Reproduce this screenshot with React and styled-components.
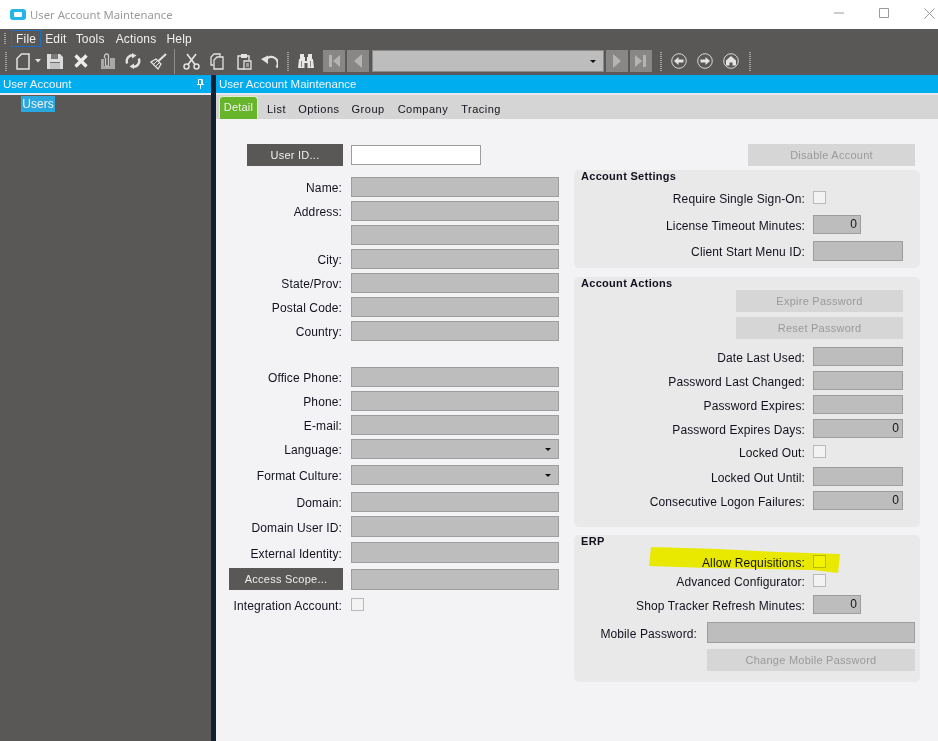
import React from "react";
import styled, { createGlobalStyle } from "styled-components";

const Global = createGlobalStyle`
  html, body { margin: 0; padding: 0; height: 100%; overflow: hidden; background: #f3f3f5; }
  * { box-sizing: border-box; }
  #root { height: 100%; }
`;

const FONT = `"Liberation Sans", Arial, sans-serif`;

const Page = styled.div`
  height: 741px; width: 938px; display: flex; flex-direction: column; font-family: ${FONT}; font-size: 12px; color: #12121e; overflow: hidden;
`;
const TitleBar = styled.div`
  height: 29px; background: #fff; display: flex; align-items: center; flex: none;
`;
const AppIcon = styled.div`
  width: 16px; height: 11px; margin: 0 4px 1px 10px; border-radius: 3px; background: #22b5e8; display: flex; align-items: center; justify-content: center;
  &::after { content: ""; width: 8px; height: 5px; background: #fff; border-radius: 1px; }
`;
const TitleText = styled.div`
  font-family: "Noto Sans", sans-serif; font-size: 11.3px; color: #9b9b9b; flex: 1;
`;
const WinBtn = styled.svg`
  margin-right: ${p => p.$mr}px; flex: none; margin-bottom: 3px;
`;
const Chrome = styled.div`
  background: #595856; height: 46px; flex: none; display: flex; flex-direction: column;
`;
const MenuBar = styled.div`
  height: 18px; display: flex; align-items: flex-end; color: #f0f0f0; padding-left: 4px; letter-spacing: 0.2px;
`;
const Grip = styled.div`
  width: 2px; height: ${p => p.$h}px; margin-left: ${p => p.$ml}px; flex: none; align-self: center;
  background: repeating-linear-gradient(to bottom, #a5a5a5 0 1px, transparent 1px 2px);
`;
const MenuItem = styled.div`
  margin-left: ${p => p.$ml}px; height: 17px; padding: 0 ${p => p.$active ? 4 : 0}px;
  border: ${p => p.$active ? "1px solid #1f6fc0" : "none"};
  line-height: ${p => p.$active ? 16 : 18}px;
`;
const Toolbar = styled.div`
  height: 28px; display: flex; align-items: center;
`;
const Tool = styled.svg`
  margin-left: ${p => p.$ml}px; flex: none; display: block;
`;
const ToolSep = styled.div`
  width: 1px; height: 25px; background: #8f8e8c; margin-left: ${p => p.$ml}px; flex: none;
`;
const NavButton = styled.div`
  width: 22px; height: 22px; margin-left: ${p => p.$ml}px; background: #888786; display: flex; align-items: center; justify-content: center; flex: none;
`;
const NavCombo = styled.div`
  width: 232px; height: 22px; margin-left: 3px; background: #bdbdbd; border: 1px solid #8a8a8a; position: relative; flex: none;
`;
const Caret = styled.div`
  position: absolute; right: ${p => p.$r}px; top: 50%; margin-top: -1px; width: 0; height: 0;
  border-left: 3px solid transparent; border-right: 3px solid transparent; border-top: 3px solid #111;
`;
const Main = styled.div`
  flex: 1; display: flex; min-height: 0;
`;
const LeftPane = styled.div`
  width: 211px; background: #595856; flex: none; display: flex; flex-direction: column;
`;
const Splitter = styled.div`
  width: 5px; background: #10202f; flex: none;
`;
const RightPane = styled.div`
  flex: 1; display: flex; flex-direction: column; background: #f3f3f5; min-width: 0;
`;
const PaneHeader = styled.div`
  height: 18px; background: #00adef; color: #f4f4f4; display: flex; align-items: center; justify-content: space-between; padding: 0 7px 0 3px; flex: none; font-size: 11.5px;
`;
const HeaderRule = styled.div`
  height: 2px; background: #e8e8e8; flex: none;
`;
const TreeItem = styled.div`
  margin: 1px 0 0 21px; width: 34px; height: 16px; background: #29a8e0; color: #f2f2f2; line-height: 16px; text-align: center;
`;
const TabBar = styled.div`
  height: 24px; background: #d5d5d5; display: flex; flex: none; align-items: flex-end; padding-left: 3px;
`;
const ActiveTab = styled.div`
  width: 39px; height: 23px; background: #67b52a; color: #f0f0f0; border: 1px solid #dff0d0; border-bottom: none; border-radius: 4px 4px 0 0; text-align: center; line-height: 20px; font-size: 11px; letter-spacing: 0.2px;
`;
const Tab = styled.div`
  margin-left: ${p => p.$ml}px; height: 24px; line-height: 28px; font-size: 11px; letter-spacing: 0.5px;
`;
const FormArea = styled.div`
  flex: 1; display: flex; align-items: flex-start; padding: 25px 0 0 13px;
`;
const LeftCol = styled.div`
  width: 330px; flex: none; display: flex; flex-direction: column;
`;
const RightCol = styled.div`
  width: 346px; flex: none; margin-left: 15px; display: flex; flex-direction: column;
`;
const Row = styled.div`
  display: flex; align-items: center; height: ${p => p.$h}px; margin-top: ${p => p.$mt || 0}px; flex: none;
`;
const Label = styled.div`
  width: ${p => p.$w}px; margin-right: ${p => p.$gap}px; padding-top: 2px; text-align: right; flex: none; white-space: nowrap; letter-spacing: 0.12px;
`;
const Field = styled.div`
  width: ${p => p.$w}px; height: ${p => p.$h}px; flex: none; background: ${p => p.$white ? "#fff" : "#bdbdbd"}; border: 1px solid #9d9d9d;
  position: relative; display: flex; align-items: center; justify-content: flex-end; padding: 0 3px 2px 0;
`;
const Check = styled.div`
  width: 13px; height: 13px; flex: none; background: #f3f3f3; border: 1px solid #b9b9b9; margin-bottom: 1px;
`;
const DarkButton = styled.div`
  width: ${p => p.$w}px; height: 22px; flex: none; margin: 0 8px 0 ${p => p.$ml}px; background: #595856; color: #eee; display: flex; align-items: center; justify-content: center; font-size: 11px; letter-spacing: 0.25px;
`;
const DisabledButton = styled.div`
  width: ${p => p.$w}px; height: 22px; flex: none; margin-left: ${p => p.$ml}px; margin-top: ${p => p.$mt || 0}px; background: #d6d6d6; color: #9a9a9a; display: flex; align-items: center; justify-content: center; font-size: 11px; letter-spacing: 0.25px;
`;
const Panel = styled.div`
  height: ${p => p.$h}px; margin-top: ${p => p.$mt}px; background: #e9e9e9; border-radius: 5px; display: flex; flex-direction: column; position: relative; flex: none;
`;
const PanelTitle = styled.div`
  height: 13px; line-height: 13px; padding-left: 7px; font-weight: bold; font-size: 11px; letter-spacing: 0.3px;
`;
const Highlight = styled.svg`
  position: absolute; left: 74px; top: 10px; mix-blend-mode: multiply; pointer-events: none;
`;

const C = "#e2e2e2";

const Icons = {
  New: () => (
    <Tool $ml={9} width="14" height="17" viewBox="0 0 14 17"><path d="M5.5 1H13V16H1V5.5Z" fill="none" stroke={C} strokeWidth="1.5" /></Tool>
  ),
  Drop: () => (
    <Tool $ml={5} width="6" height="4" viewBox="0 0 6 4"><path d="M0 0H6L3 3.5Z" fill={C} /></Tool>
  ),
  Save: () => (
    <Tool $ml={6} width="16" height="15" viewBox="0 0 16 15"><path d="M0 0H13L16 3V15H0Z" fill="#dcdcdc" /><path d="M4 0h7v5H4z" fill="#7a7977" /><path d="M3 8.5h10V15H3z" fill="#c4c4c4" /><path d="M3 8h10v1H3z" fill="#6f6e6c" /></Tool>
  ),
  Close: () => (
    <Tool $ml={11} width="14" height="14" viewBox="0 0 14 14"><path d="M1.5 1.5L12.5 12.5M12.5 1.5L1.5 12.5" stroke="#ececec" strokeWidth="3.4" /></Tool>
  ),
  Clip: () => (
    <Tool $ml={12} width="15" height="17" viewBox="0 0 15 17"><path d="M1 6H4V16H1ZM10 5H15V16H4V13H10Z" fill="#a9a8a6" /><path d="M4.5 5V3a2 2 0 0 1 4 0V12a1.6 1.6 0 0 1-3 0V5" fill="none" stroke="#c9c9c9" strokeWidth="1.3" /></Tool>
  ),
  Refresh: () => (
    <Tool $ml={10} width="16" height="16" viewBox="0 0 16 16"><path d="M2.2 10.5A6 6 0 0 1 7.5 2.2" fill="none" stroke={C} strokeWidth="2.4" /><path d="M13.8 5.5A6 6 0 0 1 8.5 13.8" fill="none" stroke={C} strokeWidth="2.4" /><path d="M7 0L11.5 2.5L7 5.5Z M9 10.5L4.5 13.5L9 16Z" fill={C} /></Tool>
  ),
  Broom: () => (
    <Tool $ml={9} width="17" height="17" viewBox="0 0 17 17"><path d="M6 6L11 11L8 16L1 9Z" fill="none" stroke={C} strokeWidth="1.3" /><path d="M8.5 8L16 1" stroke={C} strokeWidth="2" /><path d="M4 11L7 8M6 13L9 10" stroke={C} strokeWidth="1" /></Tool>
  ),
  Scissors: () => (
    <Tool $ml={8} width="17" height="17" viewBox="0 0 17 17"><circle cx="3.5" cy="13.5" r="2.5" fill="none" stroke={C} strokeWidth="1.5" /><circle cx="13.5" cy="13.5" r="2.5" fill="none" stroke={C} strokeWidth="1.5" /><path d="M5 11.5L13 1M12 11.5L4 1" stroke={C} strokeWidth="1.7" /></Tool>
  ),
  Copy: () => (
    <Tool $ml={10} width="14" height="17" viewBox="0 0 14 17"><path d="M3.5 12H1V4L4 1H10V4" fill="none" stroke={C} strokeWidth="1.3" /><path d="M7 4H13V16H4V7Z" fill="#595856" stroke={C} strokeWidth="1.3" /></Tool>
  ),
  Paste: () => (
    <Tool $ml={13} width="15" height="17" viewBox="0 0 15 17"><path d="M4 3H1V16H7M10 3H12V7" fill="none" stroke={C} strokeWidth="1.4" /><path d="M4 1H10V5H4Z" fill={C} /><path d="M7 8H14V16H7Z" fill="#595856" stroke={C} strokeWidth="1.3" /><path d="M9 11H12M9 13H12" stroke={C} /></Tool>
  ),
  Undo: () => (
    <Tool $ml={9} width="17" height="13" viewBox="0 0 17 13"><path d="M15.5 12.5A6.5 6.5 0 0 0 5 4.5" fill="none" stroke={C} strokeWidth="2.2" /><path d="M0 4L7 0.5V9Z" fill={C} /></Tool>
  ),
  Binoculars: () => (
    <Tool $ml={9} width="16" height="15" viewBox="0 0 16 15"><path d="M2 0H6V3H7V7H9V3H10V0H14V5H15L16 14H9.5V9H6.5V14H0L1 5H2Z" fill="#e6e6e6" /><path d="M3.5 7V13M12.5 7V13" stroke="#8a8a88" /></Tool>
  ),
};

const Nav = {
  First: () => <svg width="14" height="14" viewBox="0 0 14 14"><path d="M2 1H5V13H2ZM13 1V13L6 7Z" fill="#b4b4b4" /></svg>,
  Prev: () => <svg width="10" height="14" viewBox="0 0 10 14"><path d="M9 0V14L1 7Z" fill="#b4b4b4" /></svg>,
  Next: () => <svg width="10" height="14" viewBox="0 0 10 14"><path d="M1 0V14L9 7Z" fill="#b4b4b4" /></svg>,
  Last: () => <svg width="14" height="14" viewBox="0 0 14 14"><path d="M1 1L8 7L1 13ZM9 1H12V13H9Z" fill="#b4b4b4" /></svg>,
};

const RoundTool = ({ ml, children }) => (
  <Tool $ml={ml} width="16" height="16" viewBox="0 0 16 16">
    <circle cx="8" cy="8" r="7.3" fill="none" stroke="#d6d6d6" strokeWidth="1" />
    {children}
  </Tool>
);

const LeftField = ({ label, mt = 4, h = 20, select }) => (
  <Row $h={h} $mt={mt}>
    <Label $w={113} $gap={9}>{label}</Label>
    <Field $w={208} $h={h}>{select && <Caret $r={7} />}</Field>
  </Row>
);

const SideRow = ({ label, mt, h = 19, w = 90, value, check }) => (
  <Row $h={h} $mt={mt}>
    <Label $w={231} $gap={8}>{label}</Label>
    {check ? <Check /> : <Field $w={w} $h={h}>{value}</Field>}
  </Row>
);

export default function App() {
  return (
    <Page>
      <Global />
      <TitleBar>
        <AppIcon />
        <TitleText>User Account Maintenance</TitleText>
        <WinBtn $mr={35} width="10" height="2" viewBox="0 0 10 2"><path d="M0 1H10" stroke="#9a9a9a" /></WinBtn>
        <WinBtn $mr={35} width="10" height="10" viewBox="0 0 10 10"><path d="M.5.5H9.5V9.5H.5Z" fill="none" stroke="#9a9a9a" /></WinBtn>
        <WinBtn $mr={3} width="11" height="11" viewBox="0 0 11 11"><path d="M.5.5L10.5 10.5M10.5.5L.5 10.5" stroke="#9a9a9a" /></WinBtn>
      </TitleBar>
      <Chrome>
        <MenuBar>
          <Grip $h={11} $ml={0} />
          <MenuItem $active $ml={5}>File</MenuItem>
          <MenuItem $ml={4}>Edit</MenuItem>
          <MenuItem $ml={9}>Tools</MenuItem>
          <MenuItem $ml={11}>Actions</MenuItem>
          <MenuItem $ml={10}>Help</MenuItem>
        </MenuBar>
        <Toolbar>
          <Grip $h={19} $ml={5} />
          <Icons.New />
          <Icons.Drop />
          <Icons.Save />
          <Icons.Close />
          <Icons.Clip />
          <Icons.Refresh />
          <Icons.Broom />
          <ToolSep $ml={7} />
          <Icons.Scissors />
          <Icons.Copy />
          <Icons.Paste />
          <Icons.Undo />
          <Grip $h={19} $ml={9} />
          <Icons.Binoculars />
          <NavButton $ml={9}><Nav.First /></NavButton>
          <NavButton $ml={2}><Nav.Prev /></NavButton>
          <NavCombo><Caret $r={7} /></NavCombo>
          <NavButton $ml={2}><Nav.Next /></NavButton>
          <NavButton $ml={2}><Nav.Last /></NavButton>
          <Grip $h={19} $ml={8} />
          <RoundTool ml={9}><path d="M3 8L7.5 4V6.5H12.5V9.5H7.5V12Z" fill="#e4e4e4" /></RoundTool>
          <RoundTool ml={10}><path d="M13 8L8.5 4V6.5H3.5V9.5H8.5V12Z" fill="#e4e4e4" /></RoundTool>
          <RoundTool ml={10}><path d="M8 3L13 7.5V12.5H9.5V9.5H6.5V12.5H3V7.5Z" fill="#e4e4e4" /></RoundTool>
          <Grip $h={19} $ml={10} />
        </Toolbar>
      </Chrome>
      <Main>
        <LeftPane>
          <PaneHeader>
            <span>User Account</span>
            <svg width="7" height="10" viewBox="0 0 7 10"><path d="M1.5.5H5.5V5.5H1.5ZM0 5.5H7M3.5 5.5V10" fill="none" stroke="#f4f4f4" /><path d="M4 1H5.5V5H4Z" fill="#f4f4f4" /></svg>
          </PaneHeader>
          <HeaderRule />
          <TreeItem>Users</TreeItem>
        </LeftPane>
        <Splitter />
        <RightPane>
          <PaneHeader>
            <span>User Account Maintenance</span>
          </PaneHeader>
          <HeaderRule />
          <TabBar>
            <ActiveTab>Detail</ActiveTab>
            <Tab $ml={9}>List</Tab>
            <Tab $ml={12}>Options</Tab>
            <Tab $ml={12}>Group</Tab>
            <Tab $ml={13}>Company</Tab>
            <Tab $ml={13}>Tracing</Tab>
          </TabBar>
          <FormArea>
            <LeftCol>
              <Row $h={22}>
                <DarkButton $w={96} $ml={18}>User ID...</DarkButton>
                <Field $w={130} $h={20} $white />
              </Row>
              <LeftField label="Name:" mt={11} />
              <LeftField label="Address:" />
              <LeftField label="" />
              <LeftField label="City:" />
              <LeftField label="State/Prov:" />
              <LeftField label="Postal Code:" />
              <LeftField label="Country:" />
              <LeftField label="Office Phone:" mt={26} />
              <LeftField label="Phone:" />
              <LeftField label="E-mail:" />
              <LeftField label="Language:" select />
              <LeftField label="Format Culture:" mt={6} select />
              <LeftField label="Domain:" mt={7} />
              <LeftField label="Domain User ID:" h={21} />
              <LeftField label="External Identity:" mt={5} h={21} />
              <Row $h={22} $mt={5}>
                <DarkButton $w={114} $ml={0}>Access Scope...</DarkButton>
                <Field $w={208} $h={21} />
              </Row>
              <Row $h={13} $mt={8}>
                <Label $w={113} $gap={9}>Integration Account:</Label>
                <Check />
              </Row>
            </LeftCol>
            <RightCol>
              <DisabledButton $w={167} $ml={174}>Disable Account</DisabledButton>
              <Panel $h={98} $mt={4}>
                <PanelTitle>Account Settings</PanelTitle>
                <SideRow label="Require Single Sign-On:" mt={8} h={14} check />
                <SideRow label="License Timeout Minutes:" mt={10} w={48} value="0" />
                <SideRow label="Client Start Menu ID:" mt={7} h={20} />
              </Panel>
              <Panel $h={250} $mt={9}>
                <PanelTitle>Account Actions</PanelTitle>
                <DisabledButton $w={167} $ml={162}>Expire Password</DisabledButton>
                <DisabledButton $w={167} $ml={162} $mt={5}>Reset Password</DisabledButton>
                <SideRow label="Date Last Used:" mt={8} />
                <SideRow label="Password Last Changed:" mt={5} />
                <SideRow label="Password Expires:" mt={5} />
                <SideRow label="Password Expires Days:" mt={5} value="0" />
                <SideRow label="Locked Out:" mt={7} h={13} check />
                <SideRow label="Locked Out Until:" mt={9} />
                <SideRow label="Consecutive Logon Failures:" mt={5} value="0" />
              </Panel>
              <Panel $h={147} $mt={8}>
                <PanelTitle>ERP</PanelTitle>
                <SideRow label="Allow Requisitions:" mt={7} h={13} check />
                <SideRow label="Advanced Configurator:" mt={6} h={13} check />
                <SideRow label="Shop Tracker Refresh Minutes:" mt={8} w={48} value="0" />
                <Row $h={21} $mt={8}>
                  <Label $w={123} $gap={10}>Mobile Password:</Label>
                  <Field $w={208} $h={21} />
                </Row>
                <DisabledButton $w={208} $ml={133} $mt={6}>Change Mobile Password</DisabledButton>
                <Highlight width="196" height="30" viewBox="0 0 196 30">
                  <path d="M3 2L70 4L130 7L192 9L190 28L165 25L60 23L1 21Z" fill="#ffff00" />
                </Highlight>
              </Panel>
            </RightCol>
          </FormArea>
        </RightPane>
      </Main>
    </Page>
  );
}
